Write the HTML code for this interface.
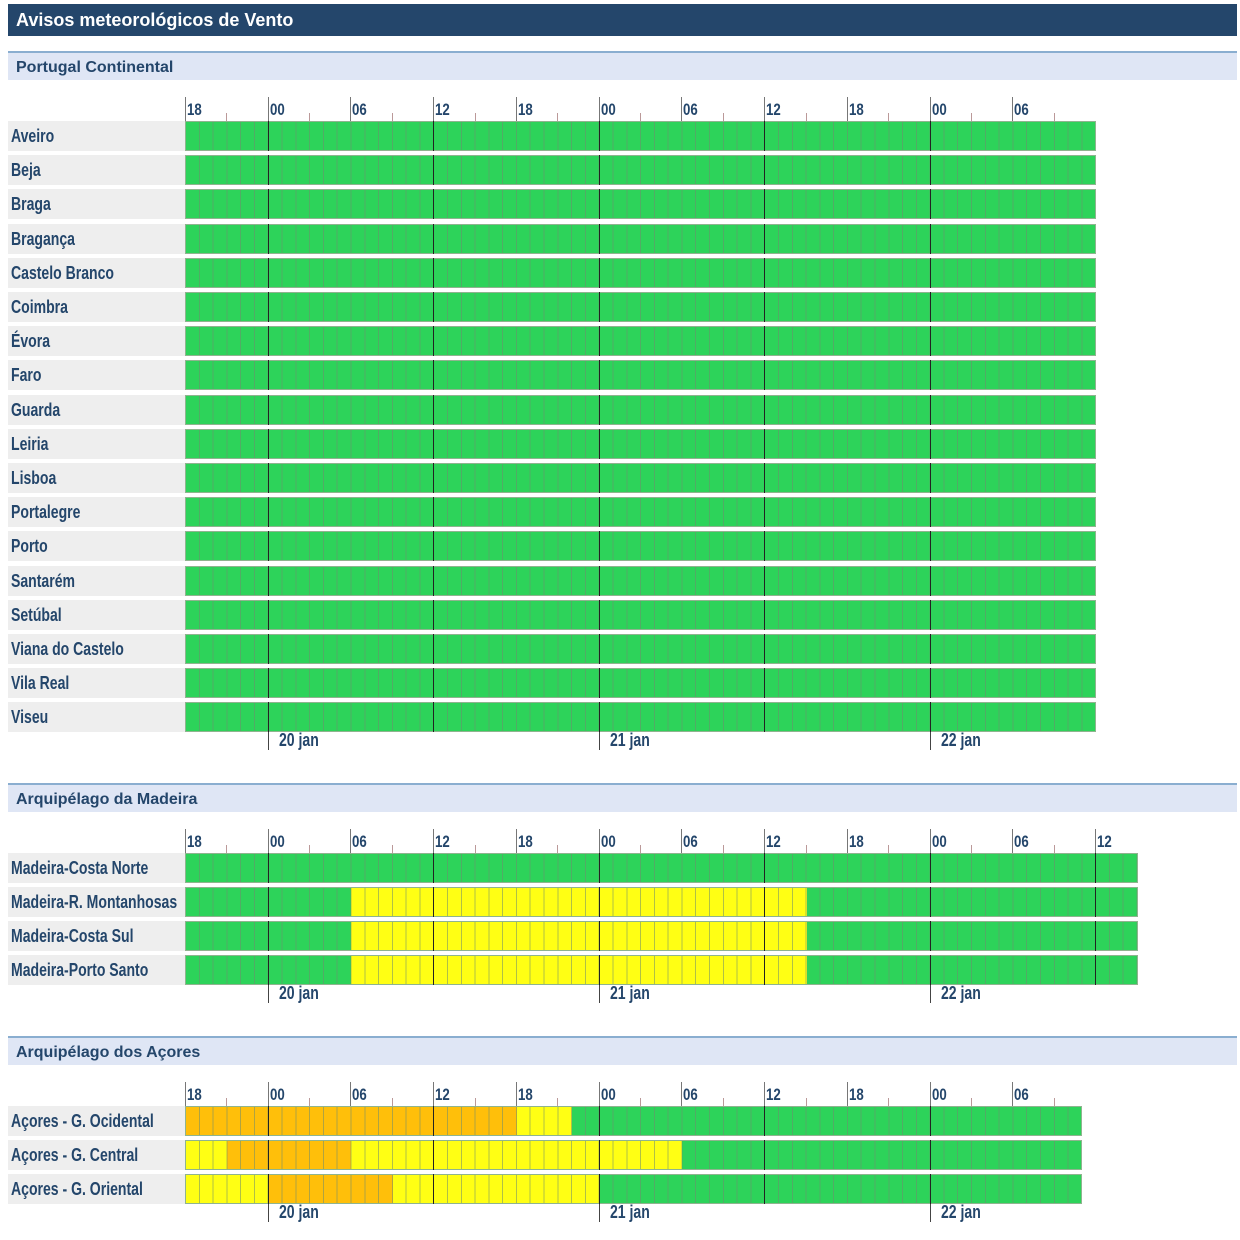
<!DOCTYPE html>
<html><head><meta charset="utf-8"><style>
body{margin:0;width:1240px;height:1240px;background:#fff;position:relative;overflow:hidden;font-family:"Liberation Sans",sans-serif}
.a{position:absolute}
.title{left:8px;top:4px;width:1229px;height:32px;background:#24466b;color:#fff;font-weight:bold;font-size:18px;line-height:32px;padding-left:8px;box-sizing:border-box}
.sec{left:8px;width:1229px;height:29px;background:#dfe6f5;border-top:2px solid #8aaed0;color:#24466b;font-weight:bold;font-size:16px;line-height:29px;padding-left:8px;box-sizing:border-box}
.lbl{left:8px;width:177px;height:30px;background:#eeeeee;color:#24466b;font-weight:bold;font-size:18px;line-height:30px;padding-left:3px;box-sizing:border-box;white-space:nowrap;overflow:hidden}
.lbl span,.tk span{display:inline-block;transform:scaleX(0.78);transform-origin:0 50%}
.tk{font-weight:bold;font-size:17px;color:#24466b;white-space:nowrap}
.row{height:30px;box-sizing:border-box;border:1px solid #8fb48f}
.seg{position:absolute;top:0;height:100%}
.ov{position:absolute;left:0;top:0;width:100%;height:100%}
</style></head><body>
<div class="a title">Avisos meteorológicos de Vento</div>
<div class="a sec" style="top:51px">Portugal Continental</div>
<div class="a sec" style="top:783px">Arquipélago da Madeira</div>
<div class="a sec" style="top:1036px">Arquipélago dos Açores</div>
<div id="g"></div>
<script>
var W=13.79,X0=185,G='#2dd35a',Y='#ffff14',O='#ffbf0a';
var h='';
function sect(axisY,rowY,names,n,segsFn){
 var labs=['18','00','06','12'];
 for(var i=0;i<n;i+=3){
  var x=X0+i*W;
  if(i%6==0){
   h+='<div class="a" style="left:'+x+'px;top:'+(axisY)+'px;width:1px;height:'+(rowY-axisY)+'px;background:#777"></div>';
   h+='<div class="a tk" style="left:'+(x+2)+'px;top:'+(axisY+3)+'px"><span>'+labs[(i/6)%4]+'</span></div>';
  } else {
   h+='<div class="a" style="left:'+x+'px;top:'+(rowY-8)+'px;width:1px;height:8px;background:#b99"></div>';
  }
 }
 var pitch=names.length<5?34:34.2;
 for(var r=0;r<names.length;r++){
  var y=Math.round(rowY+r*pitch);
  h+='<div class="a lbl" style="top:'+y+'px"><span>'+names[r]+'</span></div>';
  var w=n*W;
  var s='<div class="a row" style="left:'+X0+'px;top:'+y+'px;width:'+(w+1)+'px;overflow:hidden">';
  segsFn(r).forEach(function(sg){s+='<div class="seg" style="left:'+(sg[0]*W)+'px;width:'+((sg[1]-sg[0])*W+1)+'px;background:'+sg[2]+'"></div>';});
  s+='<div class="ov" style="background:repeating-linear-gradient(90deg,transparent 0,transparent '+(W-1)+'px,rgba(110,140,110,0.55) '+(W-1)+'px,rgba(110,140,110,0.55) '+W+'px)"></div>';
  h+=s+'</div>';
  for(var i=6;i<n;i+=12){
   h+='<div class="a" style="left:'+(X0+i*W)+'px;top:'+y+'px;width:1px;height:30px;background:#222"></div>';}
 }
 var last=Math.round(rowY+(names.length-1)*pitch)+30;
 [6,30,54].forEach(function(i,k){
  var x=X0+i*W;
  h+='<div class="a" style="left:'+x+'px;top:'+last+'px;width:1px;height:18px;background:#444"></div>';
  h+='<div class="a tk" style="left:'+(x+11)+'px;top:'+(last-2)+'px;font-size:18px"><span>'+(20+k)+' jan</span></div>';
 });
}
sect(97,121,['Aveiro','Beja','Braga','Bragança','Castelo Branco','Coimbra','Évora','Faro','Guarda','Leiria','Lisboa','Portalegre','Porto','Santarém','Setúbal','Viana do Castelo','Vila Real','Viseu'],66,function(){return [[0,66,G]]});
sect(829,853,['Madeira-Costa Norte','Madeira-R. Montanhosas','Madeira-Costa Sul','Madeira-Porto Santo'],69,function(r){return r>0?[[0,12,G],[12,45,Y],[45,69,G]]:[[0,69,G]]});
sect(1082,1106,['Açores - G. Ocidental','Açores - G. Central','Açores - G. Oriental'],65,function(r){
 if(r==0)return [[0,24,O],[24,28,Y],[28,65,G]];
 if(r==1)return [[0,3,Y],[3,12,O],[12,36,Y],[36,65,G]];
 return [[0,6,Y],[6,15,O],[15,30,Y],[30,65,G]];
});
document.getElementById('g').innerHTML=h;
</script>
</body></html>
